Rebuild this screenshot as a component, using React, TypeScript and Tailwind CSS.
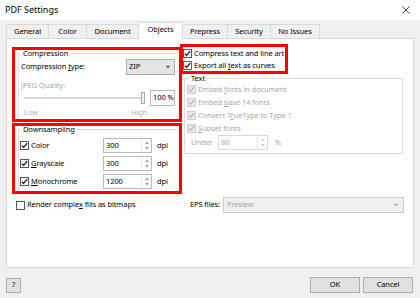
import React from "react";

const F = { fontFamily: '"Noto Sans", "Open Sans", sans-serif' };

function Check({ checked, disabled, focus }: { checked?: boolean; disabled?: boolean; focus?: boolean }) {
  const cls = disabled
    ? "bg-[#e8e8e8] border-[#cfcfcf]"
    : focus
    ? "bg-white border-[#0078d7]"
    : "bg-white border-[#555555]";
  return (
    <span className={`w-[9px] h-[9px] border flex items-center justify-center shrink-0 ${cls}`}>
      {checked && (
        <svg width="7" height="7" viewBox="0 0 7 7">
          <path d="M0.8 3.6 L2.6 5.4 L6.2 1.2" stroke={disabled ? "#b8b8b8" : "#111"} strokeWidth="1.3" fill="none" />
        </svg>
      )}
    </span>
  );
}

function Arrow({ color = "#707070" }: { color?: string }) {
  return (
    <svg width="6" height="4" viewBox="0 0 6 4">
      <path d="M0.5 0.8 L5.5 0.8 L3 3.4 Z" fill={color} />
    </svg>
  );
}

function Spin({ value, w, disabled }: { value: string; w: string; disabled?: boolean }) {
  return (
    <div className={`h-[15px] flex border ${w} ${disabled ? "border-[#d9d9d9] text-[#a8a8a8]" : "border-[#b9b9b9] text-black"} bg-white`}>
      <div className="flex-1 pl-[2px] flex items-center leading-none">{value}</div>
      <div className="w-[10px] flex flex-col items-center justify-center gap-[3px] border-l border-[#e6e6e6]">
        <svg width="4" height="3" viewBox="0 0 4 3"><path d="M0 3 L2 0.5 L4 3 Z" fill={disabled ? "#d0d0d0" : "#a0a0a0"} /></svg>
        <svg width="4" height="3" viewBox="0 0 4 3"><path d="M0 0 L2 2.5 L4 0 Z" fill={disabled ? "#d0d0d0" : "#a0a0a0"} /></svg>
      </div>
    </div>
  );
}

function Tab({ label, w, active }: { label: string; w: string; active?: boolean }) {
  if (active)
    return (
      <div className={`${w} h-[17px] bg-white border border-b-0 border-[#d9d9d9] flex items-center justify-center relative z-10 -mb-px pb-[2px] -ml-px`}>
        {label}
      </div>
    );
  return (
    <div className={`${w} h-[14px] bg-[#f0f0f0] border border-b-0 border-[#d9d9d9] flex items-center justify-center -ml-px first:ml-0`}>
      {label}
    </div>
  );
}

export default function App() {
  return (
    <div className="w-[420px] h-[298px] bg-[#f0f0f0] flex flex-col text-[7.5px] tracking-[-0.1px] text-black overflow-hidden whitespace-nowrap" style={F}>
      {/* title bar */}
      <div className="h-[20px] bg-white flex items-center justify-between pl-[5px] pr-[10px] shrink-0">
        <span className="text-[9px] tracking-normal">PDF Settings</span>
        <svg width="8" height="8" viewBox="0 0 8 8">
          <path d="M0.5 0.5 L7.5 7.5 M7.5 0.5 L0.5 7.5" stroke="#333" strokeWidth="0.9" />
        </svg>
      </div>

      {/* tabs */}
      <div className="h-[17px] mt-[1px] pl-[6px] flex items-end shrink-0">
        <Tab label="General" w="w-[43px]" />
        <Tab label="Color" w="w-[39px]" />
        <Tab label="Document" w="w-[53px]" />
        <Tab label="Objects" w="w-[45px]" active />
        <Tab label="Prepress" w="w-[46px]" />
        <Tab label="Security" w="w-[44px]" />
        <Tab label="No Issues" w="w-[50px]" />
      </div>

      {/* panel */}
      <div className="ml-[6px] w-[408px] h-[230px] bg-white border border-[#d9d9d9] shrink-0 flex flex-col">
        <div className="flex items-start">
          {/* left column */}
          <div className="ml-[5px] mt-[8px] w-[170px] flex flex-col gap-[1px]">
            {/* compression */}
            <div className="h-[75px] border-[3px] border-[#ff0000]">
              <fieldset className="ml-[3px] -mt-[1px] w-[160px] h-[70px] border-t border-l border-[#dcdcdc]">
                <legend className="ml-[2px] px-[2px] leading-[8px]">Compression</legend>
                <div className="mt-[2px] h-[16px] flex items-center pl-[2px]">
                  <span className="flex-1">
                    Compression <span className="underline">t</span>ype:
                  </span>
                  <div className="w-[49px] h-[16px] mr-[3px] bg-[#e5e5e5] border border-[#adadad] flex items-center justify-between pl-[2px] pr-[3px]">
                    <span>ZIP</span>
                    <Arrow />
                  </div>
                </div>
                <div className="mt-[5px] h-[10px] leading-[10px] pl-[2px] text-[#a8a8a8]">JPEG Quality:</div>
                <div className="h-[16px] flex items-center">
                  <div className="ml-[5px] w-[121px] h-[12px] relative flex items-center">
                    <div className="w-full h-[2px] bg-[#e7eaea] border-y border-[#d6d6d6]" />
                    <div className="absolute right-[0px] top-0 w-[4px] h-[12px] bg-[#f0f0f0] border border-[#a8a8a8]" />
                  </div>
                  <div className="ml-[5px] w-[25px] h-[16px] border border-[#b9b9b9] flex items-center pl-[2px]">100 %</div>
                </div>
                <div className="mt-[1px] h-[10px] leading-[10px] flex text-[#b0b0b0]">
                  <span className="ml-[5px] w-[107px]">Low</span>
                  <span>High</span>
                </div>
              </fieldset>
            </div>

            {/* downsampling */}
            <div className="h-[71px] border-[3px] border-[#ff0000]">
              <fieldset className="ml-[3px] -mt-[1px] w-[160px] h-[66px] border-t border-l border-[#dcdcdc]">
                <legend className="ml-[2px] px-[2px] leading-[8px]">Downsampling</legend>
                <div className="mt-[5px] flex flex-col gap-[3px]">
                  {[
                    { u: "", rest: "Color", v: "300" },
                    { u: "G", rest: "rayscale", v: "300" },
                    { u: "M", rest: "onochrome", v: "1200" },
                  ].map((r) => (
                    <div key={r.rest} className="h-[15px] flex items-center">
                      <div className="w-[84px] flex items-center pl-[1px] gap-[2px]">
                        <Check checked />
                        <span>
                          {r.u && <span className="underline">{r.u}</span>}
                          {r.rest}
                        </span>
                      </div>
                      <Spin value={r.v} w="w-[49px]" />
                      <span className="ml-[5px]">dpi</span>
                    </div>
                  ))}
                </div>
              </fieldset>
            </div>
          </div>

          {/* right column */}
          <div className="flex flex-col">
            <div className="-ml-[2px] mt-[5px] w-[108px] h-[30px] border-[3px] border-[#ff0000] pt-[1px] flex flex-col">
              <div className="h-[12px] flex items-center gap-[2px]">
                <Check checked />
                <span>Compress text and line art</span>
              </div>
              <div className="h-[12px] flex items-center gap-[2px]">
                <Check checked focus />
                <span>
                  Export all <span className="underline">t</span>ext as curves
                </span>
              </div>
            </div>
            <fieldset className="ml-[2px] w-[219px] border border-[#dcdcdc] pb-[3px]">
              <legend className="ml-[4px] px-[2px] leading-[8px]">Text</legend>
              <div className="mt-[1px] flex flex-col text-[#a8a8a8]">
                {[
                  ["Embed ", "f", "onts in document"],
                  ["Embed ", "b", "ase 14 fonts"],
                  ["Convert T", "r", "ueType to Type 1"],
                  ["", "S", "ubset fonts"],
                ].map((t) => (
                  <div key={t[2]} className="h-[13px] flex items-center gap-[2px] pl-[2px]">
                    <Check checked disabled />
                    <span>
                      {t[0]}
                      <span className="underline">{t[1]}</span>
                      {t[2]}
                    </span>
                  </div>
                ))}
                <div className="h-[15px] flex items-center pl-[6px]">
                  <span className="w-[27px]">Under</span>
                  <Spin value="80" w="w-[50px]" disabled />
                  <span className="ml-[7px]">%</span>
                </div>
              </div>
            </fieldset>
          </div>
        </div>

        {/* render complex row */}
        <div className="mt-[3px] h-[16px] flex items-center">
          <div className="ml-[9px] flex-1 flex items-center gap-[2px]">
            <Check />
            <span>
              Render comple<span className="underline">x</span> fills as bitmaps
            </span>
          </div>
          <span className="mr-[3px]">EPS files:</span>
          <div className="w-[181px] mr-[9px] h-[16px] bg-[#f0f0f0] border border-[#cccccc] flex items-center justify-between pl-[3px] pr-[4px] text-[#a8a8a8]">
            <span>Preview</span>
            <Arrow color="#b0b0b0" />
          </div>
        </div>
      </div>

      {/* bottom bar */}
      <div className="mt-[9px] flex items-center">
        <div className="ml-[6px] w-[15px] h-[15px] bg-[#e1e1e1] border border-[#adadad] flex items-center justify-center">?</div>
        <div className="ml-auto mr-[7px] flex gap-[3px]">
          <div className="w-[50px] h-[16px] bg-[#e1e1e1] border border-[#adadad] flex items-center justify-center">OK</div>
          <div className="w-[50px] h-[16px] bg-[#e1e1e1] border border-[#adadad] flex items-center justify-center">Cancel</div>
        </div>
      </div>
    </div>
  );
}
